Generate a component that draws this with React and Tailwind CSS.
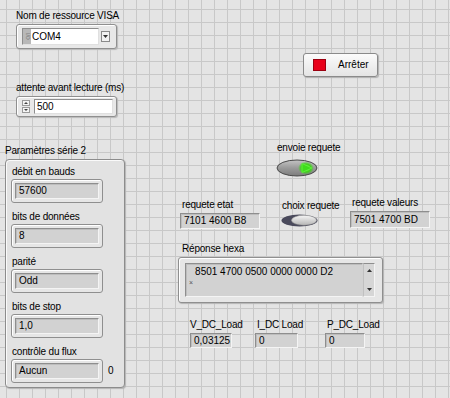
import React from "react";

const font = "font-['Liberation_Sans',Arial,sans-serif]";

// inset gray indicator field
const Field = ({ className = "", children }) => (
  <div className={`bg-[#d2d2d2] border border-t-[#8e8e8e] border-l-[#8e8e8e] border-b-[#f4f4f4] border-r-[#f4f4f4] shadow-[inset_1px_1px_0_#bdbdbd] flex items-center pl-[3px] text-[10px] leading-none text-black ${className}`}>
    {children}
  </div>
);

// raised frame with an inset field inside
const FramedField = ({ value }) => (
  <div className="w-[92px] h-[24px] rounded-[3px] border border-[#8f8f8f] bg-[#e6e6e6] shadow-[inset_1px_1px_0_#fff] p-[3px]">
    <Field className="h-full">{value}</Field>
  </div>
);

// a front-panel object: label above its body, placed on the panel canvas
const Control = ({ x, y, label, labelClass = "", children }) => (
  <div className="absolute flex flex-col items-start" style={{ left: x, top: y }}>
    <div className={`h-[13px] text-[10px] leading-none tracking-[-0.2px] text-black whitespace-nowrap ${labelClass}`}>
      {label}
    </div>
    {children}
  </div>
);

const clusterItems = [
  ["débit en bauds", "57600"],
  ["bits de données", "8"],
  ["parité", "Odd"],
  ["bits de stop", "1,0"],
  ["contrôle du flux", "Aucun"],
];

export default function App() {
  return (
    <div className={`${font} relative w-[450px] h-[398px] overflow-hidden bg-[#e4e4e4] bg-[linear-gradient(to_right,#c8c8c8_1px,transparent_1px),linear-gradient(to_bottom,#c8c8c8_1px,transparent_1px)] bg-[length:13px_13px] bg-[position:6px_9px]`}>

      {/* VISA resource */}
      <Control x={16} y={11} label="Nom de ressource VISA">
        <div className="w-[101px] h-[25px] rounded-[3px] border border-[#8f8f8f] bg-[#e8e8e8] shadow-[inset_1px_1px_0_#fff,1px_1px_1px_#b8b8b8] flex items-center pl-[5px] pr-[6px] gap-[2px]">
          <div className="flex-1 h-[17px] bg-white border border-t-[#8e8e8e] border-l-[#8e8e8e] border-b-[#e0e0e0] border-r-[#e0e0e0] flex items-center">
            <div className="w-[8px] h-full bg-[#b8b8b8] flex items-center justify-center">
              <span className="text-[5px] leading-none text-[#777] [writing-mode:vertical-lr]">I/O</span>
            </div>
            <span className="ml-[1px] text-[10px] leading-none">COM4</span>
          </div>
          <div className="w-[9px] h-[11px] border border-[#8a8a8a] bg-[#f2f2f2] flex items-center justify-center">
            <svg width="5" height="3" viewBox="0 0 5 3"><path d="M0 0h5L2.5 3z" fill="#333" /></svg>
          </div>
        </div>
      </Control>

      {/* Numeric control */}
      <Control x={16} y={83} label="attente avant lecture (ms)" labelClass="h-[12px]">
        <div className="w-[101px] h-[21px] rounded-[3px] border border-[#8f8f8f] bg-[#e8e8e8] shadow-[inset_1px_1px_0_#fff,1px_1px_1px_#b8b8b8] flex items-center pl-[5px] pr-[3px] gap-[4px]">
          <div className="flex flex-col gap-[1px]">
            <div className="w-[8px] h-[6px] border border-[#9a9a9a] bg-[#f4f4f4] flex items-center justify-center">
              <svg width="4" height="2" viewBox="0 0 4 2"><path d="M0 2h4L2 0z" fill="#444" /></svg>
            </div>
            <div className="w-[8px] h-[6px] border border-[#9a9a9a] bg-[#f4f4f4] flex items-center justify-center">
              <svg width="4" height="2" viewBox="0 0 4 2"><path d="M0 0h4L2 2z" fill="#444" /></svg>
            </div>
          </div>
          <div className="flex-1 h-[15px] bg-white border border-t-[#8e8e8e] border-l-[#8e8e8e] border-b-[#e0e0e0] border-r-[#e0e0e0] flex items-center pl-[2px] text-[10px] leading-none">
            500
          </div>
        </div>
      </Control>

      {/* Stop button */}
      <div className="absolute left-[303px] top-[53px] w-[75px] h-[24px] rounded-[3px] border border-[#8a8a8a] bg-[linear-gradient(to_bottom,#fbfbfb,#e4e4e4)] shadow-[1px_1px_1px_#b0b0b0] flex items-center pl-[9px]">
        <div className="w-[13px] h-[12px] bg-[#e8001a] border border-[#9a0010]" />
        <span className="ml-[12px] text-[10px] leading-none">Arrêter</span>
      </div>

      {/* Cluster */}
      <Control x={5} y={146} label="Paramètres série 2">
        <div className="w-[120px] h-[229px] rounded-[4px] border border-[#8c8c8c] bg-[#e2e2e2] shadow-[inset_1px_1px_0_#fafafa,1px_1px_1px_#b4b4b4] pt-[7px] pl-[5px] flex flex-col gap-[9px]">
          {clusterItems.map(([label, value], i) => (
            <div key={label} className="flex flex-col">
              <div className="h-[12px] pl-[1px] text-[10px] leading-none tracking-[-0.2px]">{label}</div>
              <div className="flex items-center">
                <FramedField value={value} />
                {i === clusterItems.length - 1 && <span className="ml-[5px] text-[10px] leading-none">0</span>}
              </div>
            </div>
          ))}
        </div>
      </Control>

      {/* envoie requete */}
      <Control x={276} y={143} label="envoie requete" labelClass="h-[16px] pl-[1px]">
        <svg width="42" height="18" viewBox="0 0 42 18">
          <defs>
            <linearGradient id="pill" x1="0" y1="0" x2="0" y2="1">
              <stop offset="0" stopColor="#c4c4c4" />
              <stop offset="0.5" stopColor="#9a9a9a" />
              <stop offset="1" stopColor="#7c7c7c" />
            </linearGradient>
            <radialGradient id="glow" cx="0.5" cy="0.5" r="0.5">
              <stop offset="0" stopColor="#9cff6a" />
              <stop offset="0.6" stopColor="#3ed01a" />
              <stop offset="1" stopColor="#3ed01a" stopOpacity="0" />
            </radialGradient>
          </defs>
          <ellipse cx="21" cy="9" rx="20" ry="8" fill="url(#pill)" stroke="#4a4a4a" strokeWidth="1" />
          <ellipse cx="30" cy="9" rx="8" ry="6.5" fill="url(#glow)" />
          <path d="M26 4.5 L36 9 L26 13.5 Z" fill="#3fdc1c" stroke="#5cf03a" strokeWidth="1" strokeLinejoin="round" />
        </svg>
      </Control>

      {/* requete etat */}
      <Control x={180} y={200} label="requete etat" labelClass="pl-[2px]">
        <Field className="w-[80px] h-[16px]">7101 4600 B8</Field>
      </Control>

      {/* choix requete */}
      <Control x={281} y={201} label="choix requete" labelClass="pl-[1px]">
        <svg width="37" height="13" viewBox="0 0 37 13">
          <defs>
            <linearGradient id="knob" x1="0" y1="0" x2="0" y2="1">
              <stop offset="0" stopColor="#f6f6f6" />
              <stop offset="1" stopColor="#b4b4b4" />
            </linearGradient>
          </defs>
          <ellipse cx="18.5" cy="6.5" rx="18" ry="6" fill="#4a4a5c" />
          <ellipse cx="23" cy="6.3" rx="12.5" ry="5" fill="url(#knob)" stroke="#8a8a8a" strokeWidth="0.5" />
        </svg>
      </Control>

      {/* requete valeurs */}
      <Control x={350} y={198} label="requete valeurs" labelClass="pl-[2px]">
        <Field className="w-[80px] h-[17px]">7501 4700 BD</Field>
      </Control>

      {/* Réponse hexa */}
      <Control x={178} y={244} label="Réponse hexa" labelClass="pl-[4px]">
        <div className="w-[205px] h-[46px] rounded-[3px] border border-[#8f8f8f] bg-[#e6e6e6] shadow-[inset_1px_1px_0_#fff,1px_1px_1px_#b4b4b4] pl-[6px] pr-[7px] py-[5px] flex">
          <div className="flex-1 bg-[#d2d2d2] border border-t-[#8e8e8e] border-l-[#8e8e8e] border-b-[#f4f4f4] border-r-transparent shadow-[inset_1px_1px_0_#bdbdbd] flex">
            <span className="self-end mb-[10px] ml-[3px] text-[7px] leading-none text-[#555]">×</span>
            <div className="ml-[2px] pt-[3px] text-[10px] leading-none">8501 4700 0500 0000 0000 D2</div>
          </div>
          <div className="w-[12px] bg-[#d6d6d6] border border-t-[#8e8e8e] border-r-[#f4f4f4] border-b-[#f4f4f4] border-l-[#c0c0c0] flex flex-col items-center justify-between py-[5px]">
            <svg width="5" height="3" viewBox="0 0 5 3"><path d="M0 3h5L2.5 0z" fill="#333" /></svg>
            <svg width="5" height="3" viewBox="0 0 5 3"><path d="M0 0h5L2.5 3z" fill="#333" /></svg>
          </div>
        </div>
      </Control>

      {/* Bottom indicators */}
      <Control x={190} y={320} label="V_DC_Load">
        <Field className="w-[42px] h-[15px]">0,03125</Field>
      </Control>
      <Control x={255} y={320} label="I_DC Load" labelClass="pl-[2px]">
        <Field className="w-[43px] h-[15px]">0</Field>
      </Control>
      <Control x={325} y={320} label="P_DC_Load" labelClass="pl-[2px]">
        <Field className="w-[40px] h-[15px]">0</Field>
      </Control>
    </div>
  );
}
